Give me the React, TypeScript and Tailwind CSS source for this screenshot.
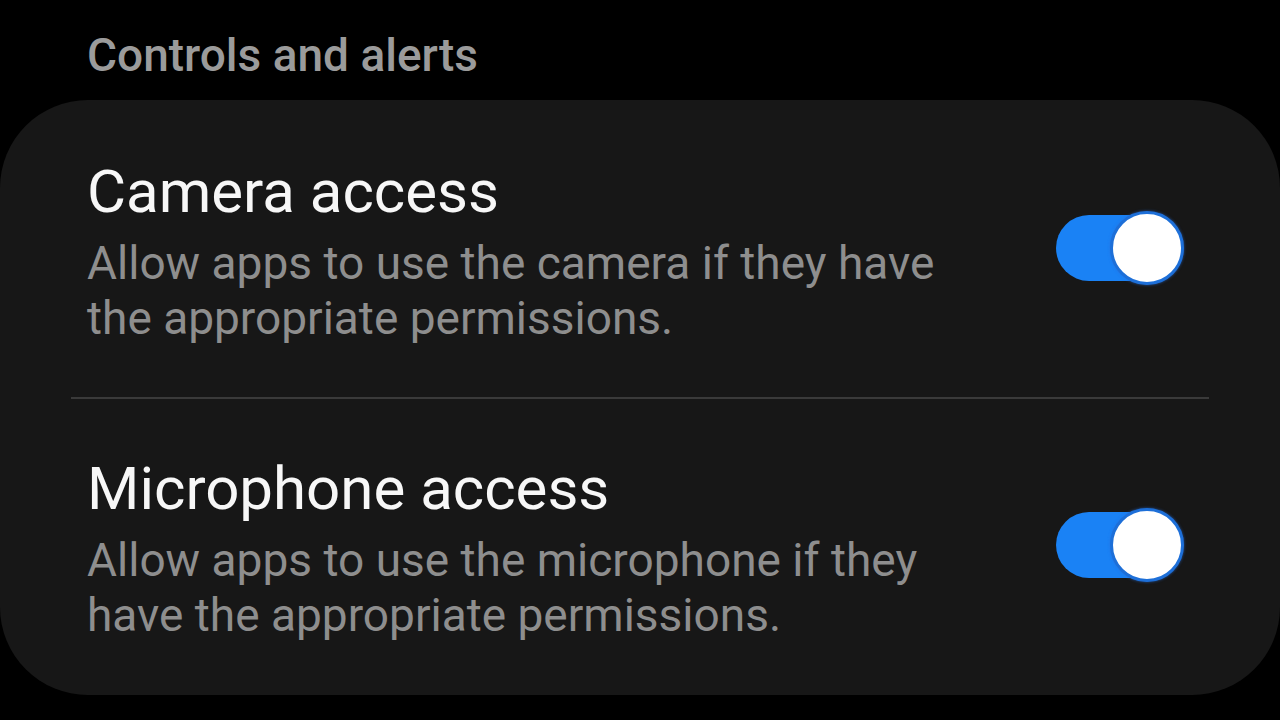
import React, { useState } from 'react';

const Toggle = ({ on, onClick }: { on: boolean; onClick: () => void }) => (
  <button
    onClick={onClick}
    className={`relative w-[120px] h-[66px] rounded-full shrink-0 mb-[8px] ${on ? 'bg-[#1a82f5]' : 'bg-[#555555]'}`}
  >
    <span
      className={`absolute top-[-4px] w-[74px] h-[74px] rounded-full bg-white border-[3px] ${
        on ? 'right-[-8px] border-[#1d6fd8]' : 'left-[-4px] border-[#555555]'
      } shadow-[0_0_3px_rgba(40,110,220,0.7)]`}
    />
  </button>
);

const Row = ({
  title,
  desc,
  on,
  onToggle,
  className,
}: {
  title: string;
  desc: string;
  on: boolean;
  onToggle: () => void;
  className: string;
}) => (
  <div className={`flex items-center pl-[87px] pr-[104px] ${className}`}>
    <div className="flex-1 min-w-0">
      <div className="text-[60px] leading-[70px] text-[#f7f7f7]">{title}</div>
      <div className="mt-[9px] w-[880px] text-[46px] leading-[55px] text-[#8e8e8e]">{desc}</div>
    </div>
    <Toggle on={on} onClick={onToggle} />
  </div>
);

export default function App() {
  const [camera, setCamera] = useState(true);
  const [mic, setMic] = useState(true);

  return (
    <div
      className="w-[1280px] h-[720px] bg-black overflow-hidden"
      style={{ fontFamily: 'Roboto, "Noto Sans", sans-serif' }}
    >
      <div className="pt-[29px] pl-[87px] mb-[19px] text-[46px] leading-[52px] font-medium text-[#9b9b9b]">
        Controls and alerts
      </div>

      <div className="bg-[#171717] rounded-[88px] pt-[57px] pb-[52px]">
        <Row
          title="Camera access"
          desc="Allow apps to use the camera if they have the appropriate permissions."
          on={camera}
          onToggle={() => setCamera(!camera)}
          className="pb-[51px]"
        />
        <div className="mx-[71px] h-[2px] bg-[#3a3a3a]" />
        <Row
          title="Microphone access"
          desc="Allow apps to use the microphone if they have the appropriate permissions."
          on={mic}
          onToggle={() => setMic(!mic)}
          className="pt-[55px]"
        />
      </div>
    </div>
  );
}
